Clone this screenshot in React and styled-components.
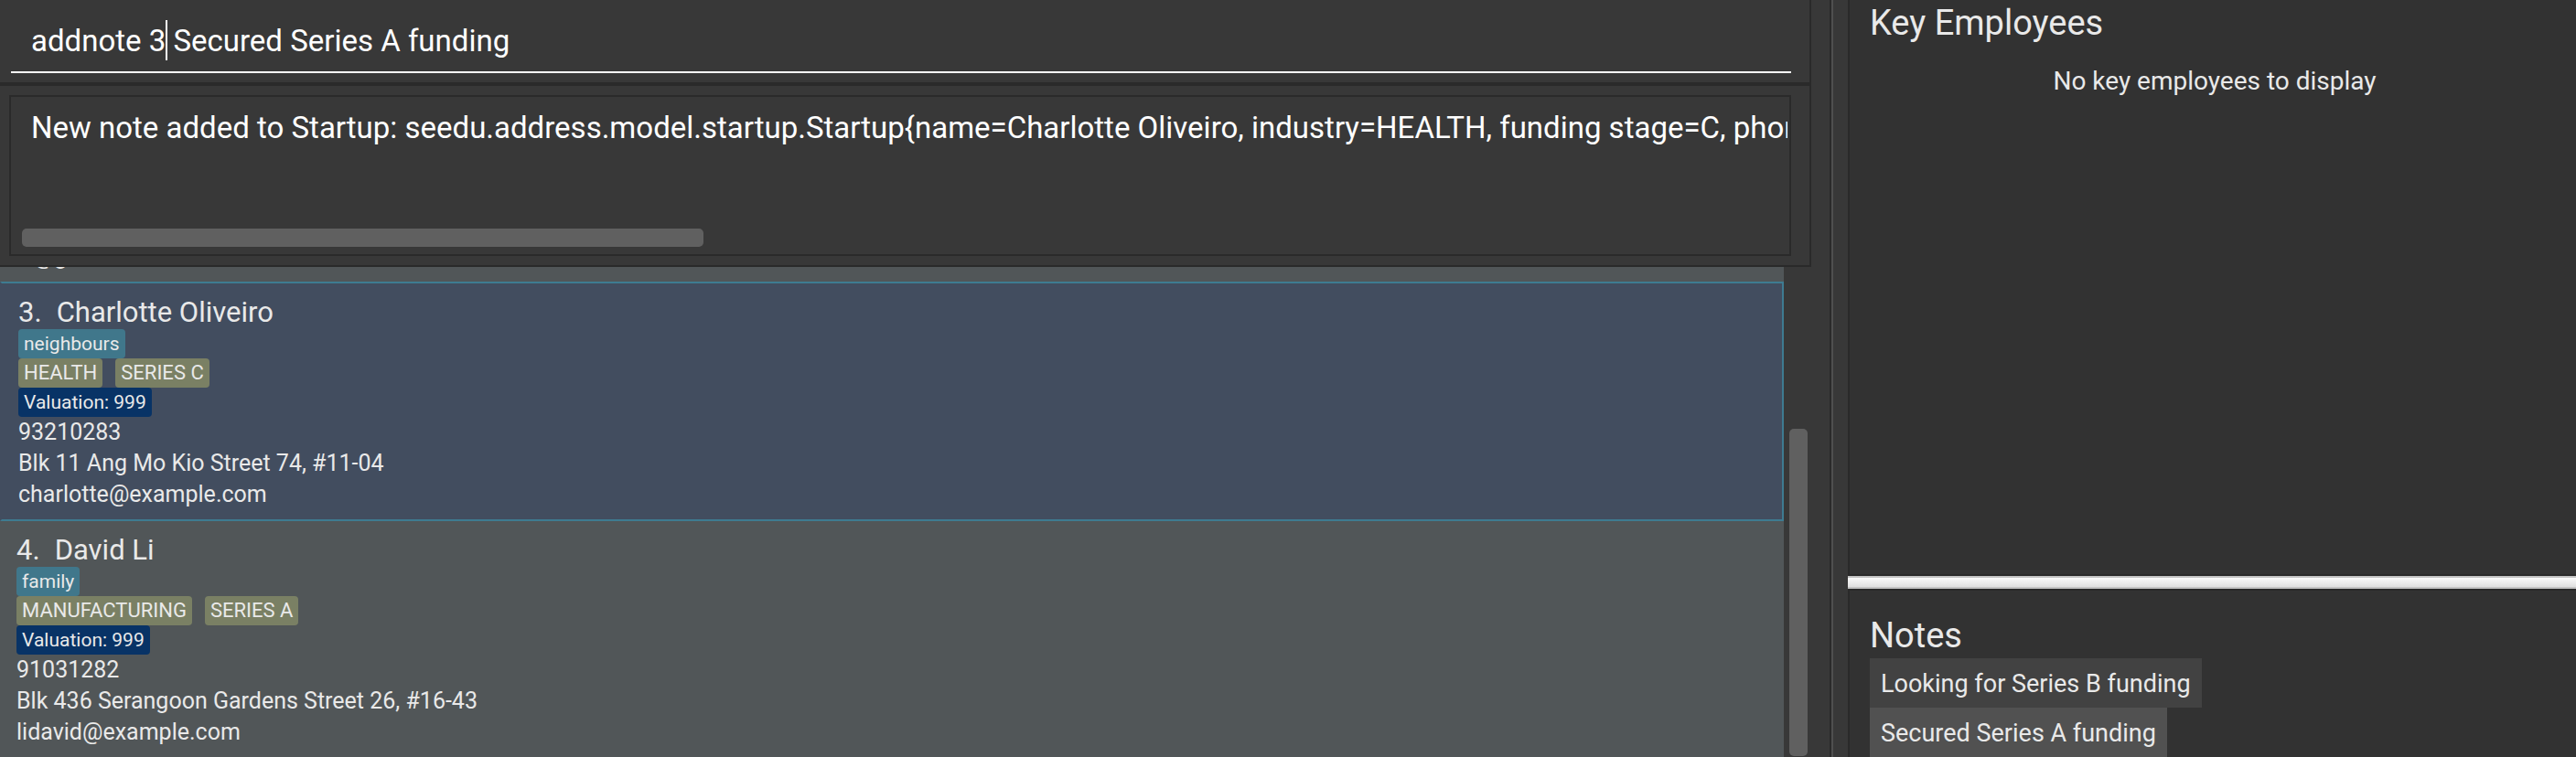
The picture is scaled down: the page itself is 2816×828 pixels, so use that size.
import React from 'react';
import styled, { createGlobalStyle } from 'styled-components';

const GlobalStyle = createGlobalStyle`
  * { box-sizing: border-box; }
  body {
    margin: 0;
    background: #383838;
    color: #e9e9e9;
    font-family: Roboto, "Liberation Sans", sans-serif;
  }
  h2, p, ul, ol, dl, dd { margin: 0; padding: 0; font-weight: 400; }
  ul, ol { list-style: none; }
`;

const line = '2px solid #2a2a2a';

const Window = styled.div`
  display: flex;
  height: 100vh;
  overflow: hidden;
`;

const MainPane = styled.main`
  flex: 500 1 0;
  min-width: 0;
  display: flex;
  flex-direction: column;
`;

const Splitter = styled.div`
  flex: none;
  width: 20px;
  border-left: ${line};
  box-shadow: inset 2px 0 #4f4f4f;
`;

const SidePane = styled.aside`
  flex: 199 1 0;
  min-width: 0;
  display: grid;
  grid-template-rows: 630fr 14px 184fr;
`;

const CommandPane = styled.form`
  margin: 0 20px 0 0;
  padding: 0 20px 10px 12px;
  border-right: ${line};
  border-bottom: ${line};
`;

const Field = styled.label`
  position: relative;
  display: block;
`;

const CommandInput = styled.input`
  display: block;
  width: 100%;
  height: 80px;
  padding: 10px 22px 0;
  border: 0;
  border-bottom: 2px solid #fff;
  border-radius: 0;
  outline: 0;
  background: transparent;
  color: #fff;
  font: 33px Roboto, "Liberation Sans", sans-serif;
  caret-color: transparent;
`;

const CaretLayer = styled.span`
  position: absolute;
  top: 22px;
  left: 22px;
  display: flex;
  height: 44px;
  border-right: 2px solid #fff;
  font-size: 33px;
  white-space: pre;
  pointer-events: none;
`;

const TypedSoFar = styled.span`
  visibility: hidden;
`;

const ResultPane = styled.section`
  margin-right: 20px;
  padding: 10px 20px 10px 10px;
  border: ${line};
  border-left: 0;
`;

const ResultBox = styled.div`
  height: 176px;
  padding: 14px 2px 8px 12px;
  border: ${line};
  display: flex;
  flex-direction: column;
  justify-content: space-between;
`;

const ResultText = styled.textarea`
  display: block;
  width: 100%;
  height: 80px;
  padding: 0 0 0 10px;
  border: 0;
  outline: 0;
  resize: none;
  overflow: hidden;
  background: transparent;
  color: #fff;
  font: 33px/40px Roboto, "Liberation Sans", sans-serif;
  white-space: pre;
`;

const HorizontalThumb = styled.div`
  width: 38.6%;
  height: 20px;
  border-radius: 5px;
  background: #606060;
`;

const ListArea = styled.section`
  flex: 1;
  min-height: 0;
  display: flex;
  gap: 6px;
  padding-right: 24px;
`;

const CardList = styled.ol`
  flex: 1;
  min-width: 0;
  display: flex;
  flex-direction: column;
  justify-content: flex-end;
  overflow: hidden;
`;

const ListTrack = styled.div`
  width: 20px;
  display: flex;
  flex-direction: column;
  justify-content: flex-end;
  padding-bottom: 1px;
`;

const VerticalThumb = styled.div`
  flex: 0 0 67%;
  border-radius: 5px;
  background: #606060;
`;

const Card = styled.li`
  flex: none;
  padding: 14px 18px 10px;
  background: ${(p) => (p.$selected ? '#424d5f' : '#515658')};
  border: ${(p) => (p.$selected ? '2px solid #3e7b91' : '0')};
  border-left-color: #424d5f;
`;

const CardName = styled.h2`
  display: flex;
  gap: 16px;
  font-size: 31px;
  line-height: 36px;
`;

const TagRow = styled.div`
  display: flex;
  gap: 14px;
`;

const tagColors = { group: '#40778b', stage: '#7a8064', value: '#083366' };

const Tag = styled.span`
  padding: 0 6px;
  border-radius: 4px;
  background: ${(p) => tagColors[p.$kind]};
  font-size: ${(p) => (p.$kind === 'stage' ? 22 : 21)}px;
  line-height: 32px;
`;

const Detail = styled.p`
  font-size: 25px;
  line-height: 34px;
`;

const Panel = styled.section`
  min-height: 0;
  overflow: hidden;
  padding: ${(p) => (p.$first ? '0' : '24px')} 18px 0 22px;
  background: #323232;
  border-left: ${line};
  border-top: ${(p) => (p.$first ? '0' : line)};
  border-bottom: ${(p) => (p.$first ? line : '0')};
`;

const PanelTitle = styled.h2`
  font-size: 38px;
  line-height: 50px;
`;

const EmptyMessage = styled.p`
  padding-top: 22px;
  font-size: 28px;
  line-height: 34px;
  text-align: center;
`;

const PanelDivider = styled.div`
  border: solid #c4c4c4;
  border-width: 2px 0;
  background: linear-gradient(#fafafa, #e0e0e0);
`;

const NoteList = styled.ul`
  display: flex;
  flex-direction: column;
  align-items: flex-start;
`;

const Note = styled.li`
  height: 54px;
  padding: 2px 12px 0;
  background: #424242;
  font-size: 27px;
  line-height: 52px;

  &:nth-child(even) { background: #515151; }
`;

const startups = [
  {
    index: 3, name: 'Charlotte Oliveiro', group: 'neighbours', industry: 'HEALTH', stage: 'SERIES C',
    valuation: 999, phone: '93210283', address: 'Blk 11 Ang Mo Kio Street 74, #11-04',
    email: 'charlotte@example.com', selected: true,
  },
  {
    index: 4, name: 'David Li', group: 'family', industry: 'MANUFACTURING', stage: 'SERIES A',
    valuation: 999, phone: '91031282', address: 'Blk 436 Serangoon Gardens Street 26, #16-43',
    email: 'lidavid@example.com',
  },
];

const notes = ['Looking for Series B funding', 'Secured Series A funding'];

const result =
  'New note added to Startup: seedu.address.model.startup.Startup{name=Charlotte Oliveiro, industry=HEALTH, funding stage=C, phone=93210283}';

function StartupCard({ startup }) {
  return (
    <Card $selected={startup.selected}>
      <CardName>
        <span>{startup.index}.</span>
        <span>{startup.name}</span>
      </CardName>
      <TagRow><Tag $kind="group">{startup.group}</Tag></TagRow>
      <TagRow>
        <Tag $kind="stage">{startup.industry}</Tag>
        <Tag $kind="stage">{startup.stage}</Tag>
      </TagRow>
      <TagRow><Tag $kind="value">Valuation: {startup.valuation}</Tag></TagRow>
      <Detail>{startup.phone}</Detail>
      <Detail>{startup.address}</Detail>
      <Detail>{startup.email}</Detail>
    </Card>
  );
}

export default function App() {
  return (
    <>
      <GlobalStyle />
      <Window>
        <MainPane>
          <CommandPane onSubmit={(e) => e.preventDefault()}>
            <Field>
              <CommandInput aria-label="Command" defaultValue="addnote 3 Secured Series A funding" />
              <CaretLayer aria-hidden="true"><TypedSoFar>addnote 3</TypedSoFar></CaretLayer>
            </Field>
          </CommandPane>
          <ResultPane>
            <ResultBox>
              <ResultText aria-label="Result" readOnly wrap="off" value={result} />
              <HorizontalThumb />
            </ResultBox>
          </ResultPane>
          <ListArea>
            <CardList>
              <Card><Detail>w@gmail.com</Detail></Card>
              {startups.map((s) => <StartupCard key={s.index} startup={s} />)}
            </CardList>
            <ListTrack><VerticalThumb /></ListTrack>
          </ListArea>
        </MainPane>
        <Splitter />
        <SidePane>
          <Panel $first>
            <PanelTitle>Key Employees</PanelTitle>
            <EmptyMessage>No key employees to display</EmptyMessage>
          </Panel>
          <PanelDivider />
          <Panel>
            <PanelTitle>Notes</PanelTitle>
            <NoteList>{notes.map((n) => <Note key={n}>{n}</Note>)}</NoteList>
          </Panel>
        </SidePane>
      </Window>
    </>
  );
}
